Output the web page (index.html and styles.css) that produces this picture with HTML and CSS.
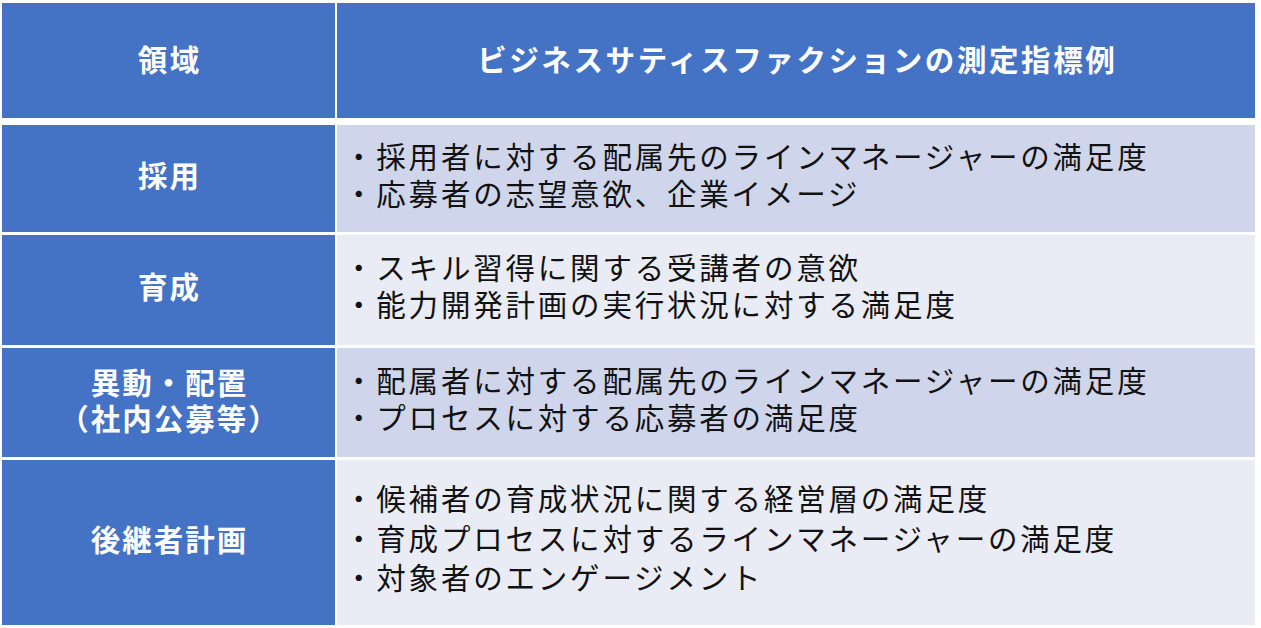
FILE: index.html
```html
<!DOCTYPE html>
<html lang="ja">
<head>
<meta charset="utf-8">
<link rel="stylesheet" href="styles.css">
</head>
<body>
<div class="table">
  <div class="cell head">領域</div>
  <div class="cell head">ビジネスサティスファクションの測定指標例</div>

  <div class="cell label">採用</div>
  <div class="cell body odd">
    <div>・採用者に対する配属先のラインマネージャーの満足度</div>
    <div>・応募者の志望意欲、企業イメージ</div>
  </div>

  <div class="cell label">育成</div>
  <div class="cell body even">
    <div>・スキル習得に関する受講者の意欲</div>
    <div>・能力開発計画の実行状況に対する満足度</div>
  </div>

  <div class="cell label two">
    <div>異動・配置</div>
    <div>（社内公募等）</div>
  </div>
  <div class="cell body odd">
    <div>・配属者に対する配属先のラインマネージャーの満足度</div>
    <div>・プロセスに対する応募者の満足度</div>
  </div>

  <div class="cell label">後継者計画</div>
  <div class="cell body even tall">
    <div>・候補者の育成状況に関する経営層の満足度</div>
    <div>・育成プロセスに対するラインマネージャーの満足度</div>
    <div>・対象者のエンゲージメント</div>
  </div>
</div>
</body>
</html>
```
FILE: styles.css
```css
html, body {
  margin: 0;
  padding: 0;
  background: #ffffff;
}
body {
  font-family: "Noto Sans CJK JP", "Noto Sans", sans-serif;
}
.table {
  display: grid;
  grid-template-columns: 333px 918px;
  grid-template-rows: 119px 107px 110px 109px 165px;
  column-gap: 2px;
  row-gap: 3px;
  padding: 3px 0 0 2px;
  width: 1253px;
}
.cell {
  display: flex;
  flex-direction: column;
  justify-content: center;
  box-sizing: border-box;
}
.head {
  background: #4472c4;
  color: #ffffff;
  font-weight: 700;
  font-size: 29.5px;
  letter-spacing: 2.6px;
  text-indent: 2.6px;
  align-items: center;
  margin-bottom: 4px;
  padding-bottom: 6px;
}
.label {
  background: #4472c4;
  color: #ffffff;
  font-weight: 700;
  font-size: 29.5px;
  letter-spacing: 2px;
  text-indent: 2px;
  align-items: center;
  padding-bottom: 10px;
  line-height: 36px;
}
.label.two {
  padding-bottom: 8px;
}
.body {
  color: #111111;
  font-size: 29.5px;
  letter-spacing: 2.8px;
  line-height: 37px;
  padding: 0 0 10px 7px;
}
.body.tall {
  line-height: 39.5px;
}
.odd {
  background: #cfd5ea;
}
.even {
  background: #e9ebf5;
}
```
